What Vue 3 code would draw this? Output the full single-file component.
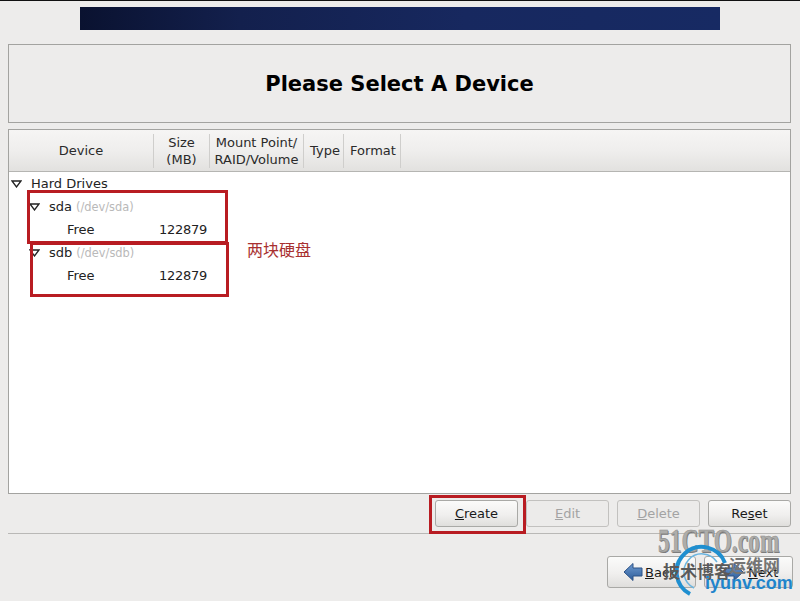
<script setup>
const columns = [
  { label: 'Device', cls: 'c-device' },
  { label: 'Size\n(MB)', cls: 'c-size' },
  { label: 'Mount Point/\nRAID/Volume', cls: 'c-mount' },
  { label: 'Type', cls: 'c-type' },
  { label: 'Format', cls: 'c-format' }
]
const drives = [
  { name: 'sda', path: '(/dev/sda)' },
  { name: 'sdb', path: '(/dev/sdb)' }
]
</script>

<template>
  <div class="page">
    <div class="banner-row"><div class="banner"></div></div>
    <div class="title-box"><h1>Please Select A Device</h1></div>
    <div class="table">
      <div class="thead">
        <div v-for="c in columns" :key="c.label" class="th" :class="c.cls">{{ c.label }}</div>
        <div class="th-rest"></div>
      </div>
      <div class="tbody">
        <div class="row top">
          <svg class="tri" width="11" height="8" viewBox="0 0 11 8"><polygon points="1,1 10,1 5.5,7" fill="#fff" stroke="#222" stroke-width="1.3"/></svg>Hard Drives
        </div>
        <template v-for="d in drives" :key="d.name">
          <div class="row drive">
            <svg class="tri" width="11" height="8" viewBox="0 0 11 8"><polygon points="1,1 10,1 5.5,7" fill="#fff" stroke="#222" stroke-width="1.3"/></svg>{{ d.name }}<span class="path">{{ d.path }}</span>
          </div>
          <div class="row free"><span class="fname">Free</span><span class="fsize">122879</span></div>
        </template>
        <div class="note">两块硬盘</div>
        <div class="mark m1"></div>
        <div class="mark m2"></div>
      </div>
    </div>
    <div class="actions">
      <button class="btn"><u>C</u>reate</button>
      <button class="btn off"><u>E</u>dit</button>
      <button class="btn off"><u>D</u>elete</button>
      <button class="btn">Re<u>s</u>et</button>
      <div class="mark m3"></div>
    </div>
    <div class="rule"></div>
    <div class="nav">
      <button class="btn navbtn back">
        <svg width="20" height="20" viewBox="0 0 20 20"><defs><linearGradient id="ag" x1="0" y1="0" x2="0" y2="1"><stop offset="0" stop-color="#6f9bd0"/><stop offset="1" stop-color="#2c5c9a"/></linearGradient></defs><path d="M1 10 10 1.500V6h9v8h-9v4.500z" fill="url(#ag)" stroke="#2c5286"/></svg>
        <span><u>B</u>ack</span>
      </button>
      <button class="btn navbtn next">
        <svg width="20" height="20" viewBox="0 0 20 20"><path d="M19 10 10 1.500V6H1v8h9v4.500z" fill="url(#ag)" stroke="#2c5286"/></svg>
        <span><u>N</u>ext</span>
      </button>
    </div>
    <div class="wm">
      <div class="wm-cto">51CTO.com</div>
      <div class="wm-ops">运维网</div>
      <svg class="wm-arc" width="70" height="70" viewBox="0 0 70 70">
        <path d="M51 23A25 25 0 1 0 16 54" fill="none" stroke="#1f8fd0" stroke-width="4"/>
        <path d="M43 22A18 18 0 1 0 20 48" fill="none" stroke="#6bb5e0" stroke-width="1.500"/>
      </svg>
      <div class="wm-tech">技术博客</div>
      <div class="wm-url">iyunv.com</div>
    </div>
  </div>
</template>

<style>
html, body { margin: 0; background: #edeceb; }
</style>

<style scoped>
.page {
  position: relative;
  width: 800px;
  height: 601px;
  overflow: hidden;
  box-sizing: border-box;
  background: #edeceb;
  border-top: 1px solid #111;
  padding: 6px 9px 0 8px;
  font-family: "DejaVu Sans", sans-serif;
  font-size: 13px;
  color: #222;
}
.banner-row { display: flex; justify-content: center; padding-left: 1px; }
.banner {
  width: 640px;
  height: 23px;
  background: linear-gradient(90deg, #0a1230 0%, #13204d 25%, #17285f 60%, #172a63 100%);
}
.title-box {
  margin-top: 14px;
  height: 79px;
  box-sizing: border-box;
  border: 1px solid #a3a3a0;
  display: flex;
  align-items: center;
  justify-content: center;
}
h1 { margin: 0; font-size: 21px; font-weight: 700; color: #000; }
.table {
  margin-top: 6px;
  height: 365px;
  box-sizing: border-box;
  border: 1px solid #a3a3a0;
  background: #fff;
  display: flex;
  flex-direction: column;
}
.thead {
  display: flex;
  height: 42px;
  box-sizing: border-box;
  flex: none;
  border-bottom: 1px solid #b5b5b2;
  background: linear-gradient(#f6f5f4 0%, #efeeed 50%, #e2e1df 100%);
  align-items: center;
}
.th {
  box-sizing: border-box;
  height: 34px;
  white-space: pre-line;
  line-height: 17px;
  text-align: center;
  border-right: 1px solid #cfcecc;
  display: flex;
  align-items: center;
  justify-content: center;
  color: #2a2a2a;
}
.c-device { width: 145px; }
.c-size { width: 56px; }
.c-mount { width: 94px; }
.c-type { width: 40px; padding-left: 3px; }
.c-format { width: 57px; padding-left: 2px; }
.th-rest { flex: 1; }
.tbody { position: relative; flex: 1; }
.row { height: 23px; display: flex; align-items: center; white-space: nowrap; }
.top { padding-left: 2px; }
.drive { padding-left: 20px; }
.free { padding-left: 58px; }
.tri { flex: none; margin-right: 9px; }
.path { margin-left: 4px; font-size: 11.4px; color: #b9b9b9; }
.fname { width: 92px; }
.fsize { letter-spacing: -0.25px; }
.note {
  position: absolute;
  left: 238px;
  top: 65px;
  font-family: "Noto Sans CJK SC", sans-serif;
  font-size: 16px;
  color: #a83030;
}
.mark { position: absolute; box-sizing: border-box; border: 3px solid #b81c22; pointer-events: none; }
.m1 { left: 18px; top: 18px; width: 201px; height: 54px; }
.m2 { left: 21px; top: 70px; width: 199px; height: 55px; }
.actions {
  position: relative;
  display: flex;
  justify-content: flex-end;
  gap: 8px;
  margin-top: 6px;
}
.btn {
  box-sizing: border-box;
  width: 83px;
  height: 27px;
  padding: 0;
  border: 1px solid #a9a9a6;
  border-radius: 3px;
  background: linear-gradient(#fbfbfa 0%, #f0efee 55%, #dfdedc 100%);
  font: inherit;
  color: #1a1a1a;
}
.off { color: #a3a3a3; background: #ecebea; border-color: #c2c1bf; }
.m3 { left: 421px; top: -5px; width: 97px; height: 39px; }
.rule { margin-top: 6px; border-top: 1px solid #b9b8b6; margin-right: -9px; }
.nav {
  display: flex;
  justify-content: flex-end;
  gap: 8px;
  margin-top: 22px;
  margin-right: -2px;
}
.navbtn {
  display: flex;
  align-items: center;
  gap: 2px;
  width: 89px;
  height: 32px;
}
.back { padding-left: 15px; }
.next { padding-left: 19px; gap: 4px; }
.wm { position: absolute; inset: 0; pointer-events: none; }
.wm-cto {
  position: absolute;
  left: 658px;
  top: 521px;
  font: 700 34px "Liberation Serif", serif;
  color: #adadab;
  -webkit-text-stroke: 0.6px #8f8f8d;
  text-shadow: 1px 1px 0 #777;
  transform: scaleX(0.69);
  transform-origin: left top;
  white-space: nowrap;
}
.wm-arc { position: absolute; left: 674px; top: 539px; }
.wm-ops { position: absolute; left: 729px; top: 553px; font: 700 17px/22px "Noto Sans CJK SC", sans-serif; color: #757575; white-space: nowrap; }
.wm-tech { position: absolute; left: 663px; top: 559px; font: 700 17px/22px "Noto Sans CJK SC", sans-serif; color: #5a5a5a; white-space: nowrap; }
.wm-url { position: absolute; left: 705px; top: 572px; font: 700 18px/20px "Liberation Sans", sans-serif; color: #1f85cc; white-space: nowrap; }
</style>
